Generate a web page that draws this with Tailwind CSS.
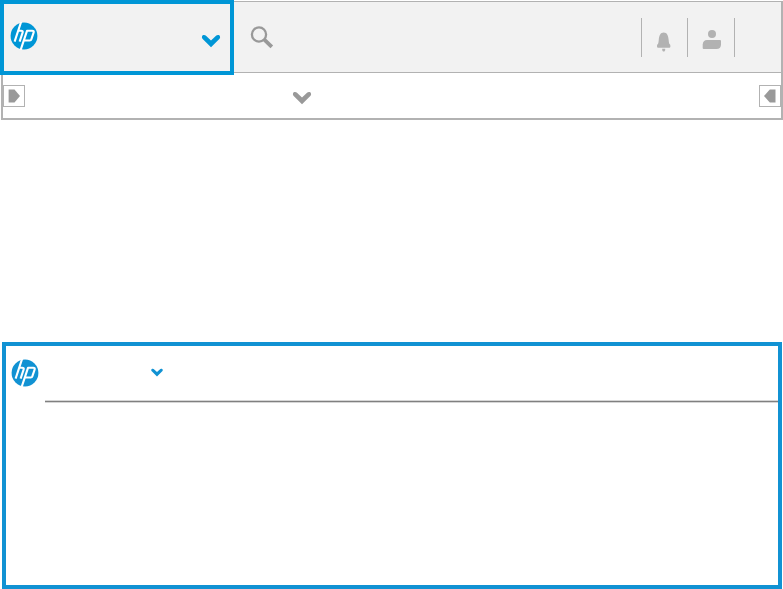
<!DOCTYPE html>
<html lang="en">
<head>
<meta charset="utf-8">
<title>HP header</title>
<script src="https://cdn.jsdelivr.net/npm/@tailwindcss/browser@4"></script>
</head>
<body class="bg-white w-[783px] h-[589px] overflow-hidden font-['Liberation_Sans',sans-serif]">
<svg class="hidden">
  <symbol id="hp" viewBox="0 0 28 28">
    <clipPath id="disc"><circle cx="14" cy="14" r="13.4"/></clipPath>
    <circle cx="14" cy="14" r="13.4" fill="currentColor"/>
    <g clip-path="url(#disc)" fill="none" stroke="#fff" stroke-width="2.1" stroke-linejoin="round">
      <path d="M11.4 -1L4.6 19.6M7.8 8.8H11.2Q13.2 8.8 12.6 10.6L9.6 19.6"/>
      <path d="M10.3 29L17 8.8H22.2Q24.2 8.8 23.6 10.6L21.4 17.2Q21 18.5 19.6 18.5H14"/>
    </g>
  </symbol>
  <symbol id="chevron" viewBox="0 0 20 14">
    <path d="M.9 3.3Q.8 1.7 2.3 1.1Q3.6 .6 4.7 1.6L10 6.4L15.3 1.6Q16.4 .6 17.7 1.1Q19.2 1.7 19.1 3.3Q19 4.4 18.3 5.1L10 13.2L1.7 5.1Q1 4.4 .9 3.3Z" fill="currentColor"/>
  </symbol>
</svg>
<div class="h-full flex flex-col">
  <header class="h-[120px] w-full flex flex-col relative">
    <div class="h-[73px] flex">
      <div class="w-[234px] h-[75px] shrink-0 border-4 border-[#0096d6] bg-[#f2f2f2] flex items-start relative z-10 text-[#0096d6]">
        <svg class="size-7 ml-[6px] mt-[18px]"><use href="#hp"/></svg>
        <svg class="w-5 h-[14px] ml-[163px] mt-[30px]"><use href="#chevron"/></svg>
      </div>
      <div class="mt-px h-[72px] flex-1 flex items-start bg-[#f2f2f2] border-t border-b border-r-2 border-[#b2b2b2]">
        <svg class="w-6 h-6 ml-4 mt-[23px]" viewBox="0 0 24 24" fill="none" stroke="#999"><circle cx="9" cy="9.5" r="7.1" stroke-width="2.3"/><path d="M14.3 14.6L21.8 21.8" stroke-width="3.8"/></svg>
        <div class="ml-auto mr-[46px] mt-4 flex h-[39px] w-[94px] border-x border-[#b2b2b2] text-[#b2b2b2]">
          <div class="w-[46px] border-r border-[#b2b2b2]">
            <svg class="w-4 h-5 ml-[14px] mt-[14px]" viewBox="0 0 16 20" fill="currentColor"><path d="M7.7 .5C10.9 .5 12.2 3.3 12.6 7.5C12.9 10.8 13 12 14.1 12.6Q15 15.7 13.4 15.7H2Q.4 15.7 1.3 12.6C2.4 12 2.5 10.8 2.8 7.5C3.2 3.3 4.5 .5 7.7 .5ZM6.2 16.7H9.2V18.2L8.4 19.6H7L6.2 18.2Z"/></svg>
          </div>
          <svg class="w-5 h-5 ml-[14px] mt-[11px]" viewBox="0 0 20 20" fill="currentColor"><circle cx="10" cy="5" r="4"/><path d="M5 11H18Q19 11 19 12V15.5Q18.8 20 14.5 20H1.7Q.7 20 .7 19V15.5Q1 11 5 11Z"/></svg>
        </div>
      </div>
    </div>
    <div class="ml-px flex-1 border-x-2 border-b-2 border-[#b2b2b2] flex items-start text-[#999]">
      <div class="size-[22px] mt-3 border border-[#b2b2b2]"><svg class="size-5" viewBox="0 0 20 20"><path d="M4.6 3.4H10.5L16 10L10.5 16.4H4.6Z" fill="currentColor"/></svg></div>
      <svg class="w-5 h-[14px] ml-[267px] mt-[18px]"><use href="#chevron"/></svg>
      <div class="size-[22px] mt-3 ml-auto border border-[#b2b2b2]"><svg class="size-5" viewBox="0 0 20 20"><path d="M15.5 3.4H9.8L4 10L9.8 16.6H15.5Z" fill="currentColor"/></svg></div>
    </div>
  </header>
  <main class="mt-[222px] ml-[2px] w-[780px] h-[247px] border-4 border-[#1192d3] text-[#1192d3]">
    <div class="h-[54px] flex items-start">
      <svg class="size-7 ml-[5px] mt-[13px]"><use href="#hp"/></svg>
      <svg class="w-3 h-[9px] ml-[112px] mt-[22px]" viewBox="0.5 0.5 19 13"><use href="#chevron" width="20" height="14"/></svg>
    </div>
    <div class="ml-[39px] h-[3px] border-y border-t-[#d6d6d6] border-b-[#d6d6d6] bg-[#808080]"></div>
  </main>
</div>
</body>
</html>
